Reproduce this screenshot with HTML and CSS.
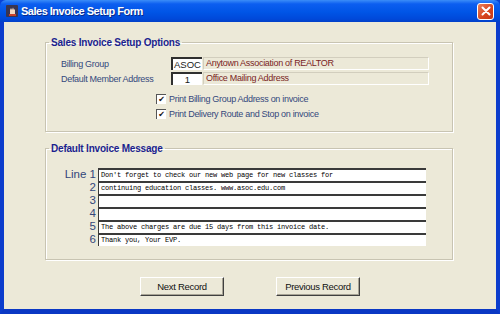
FILE: index.html
```html
<!DOCTYPE html>
<html lang="en">

<head>
    <meta charset="UTF-8">
    <title>Sales Invoice Setup Form</title>
    <link rel="stylesheet" href="styles.css">
</head>

<body>
    <div class="window">
        <div class="titlebar">
            <svg class="app-icon" width="12" height="12" viewBox="0 0 12 12">
                <rect x="0" y="0" width="12" height="12" rx="1" fill="#3a3550"/>
                <path d="M4 10 L4 5 L5 3 L6 5 L7 2.5 L8 5 L9 4 L9 10 Z" fill="#f2d7c0"/>
                <rect x="3" y="9" width="7" height="2" fill="#c8402a"/>
            </svg>
            <span class="title">Sales Invoice Setup Form</span>
            <div class="close-btn">
                <svg width="10" height="10" viewBox="0 0 10 10">
                    <path d="M1.5 1.5 L8.5 8.5 M8.5 1.5 L1.5 8.5" stroke="#fff" stroke-width="2" stroke-linecap="round"/>
                </svg>
            </div>
        </div>

        <div class="client">
            <!-- Setup options -->
            <fieldset class="group group-options">
                <legend>Sales Invoice Setup Options</legend>
                <div class="options-body">
                    <div class="field-row">
                        <label>Billing Group</label>
                        <div class="code-box code-left">ASOC</div>
                        <div class="desc-box">Anytown Association of REALTOR</div>
                    </div>
                    <div class="field-row">
                        <label>Default Member Address</label>
                        <div class="code-box">1</div>
                        <div class="desc-box">Office Mailing Address</div>
                    </div>
                    <div class="checks">
                        <div class="check-row"><span class="checkbox">&#10004;</span>Print Billing Group Address on invoice</div>
                        <div class="check-row"><span class="checkbox">&#10004;</span>Print Delivery Route and Stop on invoice</div>
                    </div>
                </div>
            </fieldset>

            <!-- Invoice message lines -->
            <fieldset class="group group-message">
                <legend>Default Invoice Message</legend>
                <div class="msg-lines">
                    <div class="msg-row"><span class="line-no">Line 1</span><div class="msg-input">Don't forget to check our new web page for new classes for</div></div>
                    <div class="msg-row"><span class="line-no">2</span><div class="msg-input">continuing education classes. www.asoc.edu.com</div></div>
                    <div class="msg-row"><span class="line-no">3</span><div class="msg-input"></div></div>
                    <div class="msg-row"><span class="line-no">4</span><div class="msg-input"></div></div>
                    <div class="msg-row"><span class="line-no">5</span><div class="msg-input">The above charges are due 15 days from this invoice date.</div></div>
                    <div class="msg-row"><span class="line-no">6</span><div class="msg-input">Thank you, Your EVP.</div></div>
                </div>
            </fieldset>

            <div class="buttons">
                <button class="btn">Next Record</button>
                <button class="btn">Previous Record</button>
            </div>
        </div>
    </div>
</body>

</html>
```

FILE: styles.css
```css
body {
    margin: 0;
    padding: 0;
    font-family: "Liberation Sans", Arial, sans-serif;
    background-color: #0842d8;
}

.window {
    width: 500px;
    height: 314px;
    box-sizing: border-box;
    display: flex;
    flex-direction: column;
    background-color: #0a3fd0;
    border-left: 4px solid #0b3ccc;
    border-right: 4px solid #0b3ccc;
    border-bottom: 5px solid #0a38c4;
    border-radius: 6px 6px 0 0;
}

.titlebar {
    height: 22px;
    margin: 0 -4px;
    padding: 0 6px;
    display: flex;
    align-items: center;
    background: linear-gradient(to bottom, #3b8df8 0%, #0c5ef0 18%, #0055e6 55%, #0049da 85%, #0340c8 100%);
    border-radius: 6px 6px 0 0;
    flex-shrink: 0;
}

.app-icon {
    margin-right: 3px;
}

.title {
    color: #fff;
    font-weight: bold;
    font-size: 11px;
    letter-spacing: -0.5px;
    text-shadow: 1px 1px 0 #0a2a8a;
    flex: 1;
}

.close-btn {
    width: 17px;
    height: 17px;
    box-sizing: border-box;
    border: 1px solid #fff;
    border-radius: 3px;
    background: linear-gradient(to bottom right, #e8805c, #d6441e 60%, #c2381a);
    display: flex;
    align-items: center;
    justify-content: center;
}

.client {
    flex: 1;
    background-color: #ece9d8;
    padding: 15px 0 0 41px;
    display: flex;
    flex-direction: column;
}

.group {
    width: 408px;
    box-sizing: border-box;
    margin: 0;
    border: 1px solid #c8c4b2;
    box-shadow: inset 1px 1px 0 #fff, 1px 1px 0 #fff;
    padding: 0;
}

.group legend {
    font-size: 10px;
    font-weight: bold;
    letter-spacing: -0.2px;
    color: #1b1f8f;
    padding: 0 2px;
    margin-left: 3px;
}

.group-options {
    height: 95px;
}

.options-body {
    padding: 8px 0 0 15px;
}

.field-row {
    display: flex;
    align-items: center;
    height: 15px;
    font-size: 9px;
    letter-spacing: -0.3px;
}

.field-row label {
    width: 110px;
    color: #34487c;
    white-space: nowrap;
}

.code-box {
    width: 31px;
    height: 13px;
    box-sizing: border-box;
    background-color: #fff;
    border-top: 2px solid #303030;
    border-left: 2px solid #303030;
    text-align: center;
    font-size: 9.5px;
    letter-spacing: 0;
    line-height: 11px;
    color: #202020;
}

.code-left {
    text-align: left;
    padding-left: 1px;
}

.desc-box {
    width: 226px;
    height: 13px;
    box-sizing: border-box;
    margin-left: 1px;
    border: 1px solid #d2cebe;
    border-right-color: #fff;
    border-bottom-color: #fff;
    padding-left: 2px;
    line-height: 11px;
    color: #7a1e1e;
}

.checks {
    margin: 5px 0 0 95px;
}

.check-row {
    display: flex;
    align-items: center;
    height: 15px;
    font-size: 9px;
    letter-spacing: -0.3px;
    color: #34487c;
}

.checkbox {
    width: 10px;
    height: 10px;
    box-sizing: border-box;
    border-top: 1px solid #555;
    border-left: 1px solid #555;
    background-color: #fff;
    margin-right: 3px;
    font-family: "DejaVu Sans", sans-serif;
    font-size: 8px;
    line-height: 9px;
    text-align: center;
    color: #111;
}

.group-message {
    margin-top: 11px;
    height: 117px;
}

.msg-lines {
    display: flex;
    flex-direction: column;
    padding-top: 14px;
}

.msg-row {
    display: flex;
    align-items: stretch;
    height: 13px;
}

.line-no {
    width: 50px;
    padding-right: 2px;
    text-align: right;
    font-size: 11.5px;
    line-height: 13px;
    color: #33467a;
}

.msg-input {
    width: 328px;
    box-sizing: border-box;
    background-color: #fff;
    border-top: 2px solid #3a3a3a;
    border-left: 1px solid #3a3a3a;
    padding-left: 2px;
    font-family: "Liberation Mono", monospace;
    font-size: 7px;
    letter-spacing: -0.2px;
    line-height: 10px;
    color: #000;
    white-space: nowrap;
}

.buttons {
    display: flex;
    justify-content: center;
    gap: 52px;
    margin: 17px 0 0 -41px;
}

.btn {
    width: 84px;
    height: 19px;
    box-sizing: border-box;
    background-color: #ece9d8;
    border: 1px solid #fff;
    border-right-color: #404040;
    border-bottom-color: #404040;
    box-shadow: inset -1px -1px 0 #a8a496;
    font-family: "Liberation Sans", Arial, sans-serif;
    font-size: 9.5px;
    letter-spacing: -0.3px;
    color: #111;
    padding: 0;
}
```
